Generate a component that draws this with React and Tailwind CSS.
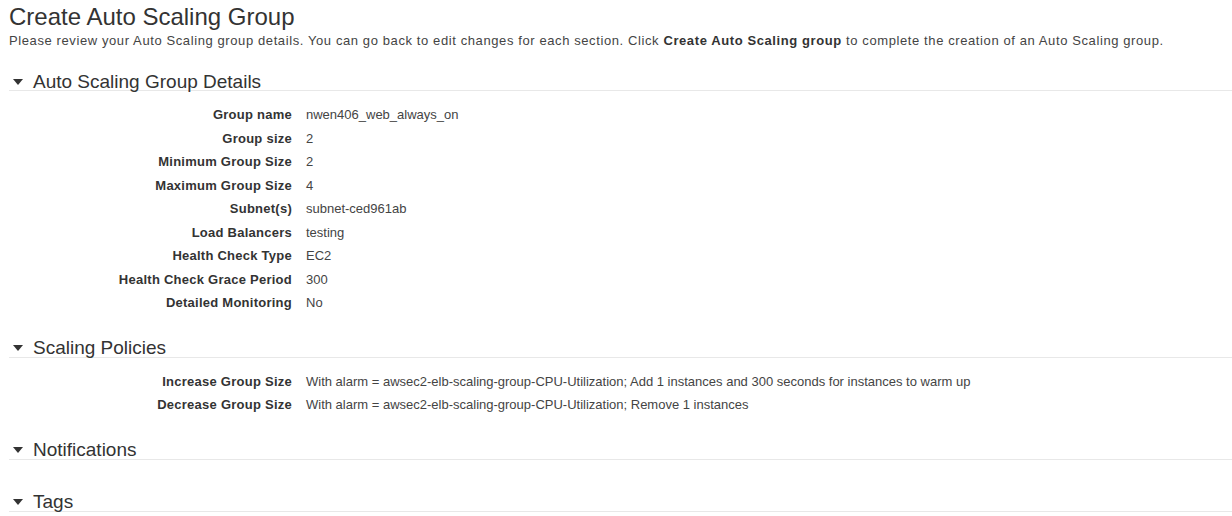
const details = [
  ['Group name', 'nwen406_web_always_on'],
  ['Group size', '2'],
  ['Minimum Group Size', '2'],
  ['Maximum Group Size', '4'],
  ['Subnet(s)', 'subnet-ced961ab'],
  ['Load Balancers', 'testing'],
  ['Health Check Type', 'EC2'],
  ['Health Check Grace Period', '300'],
  ['Detailed Monitoring', 'No'],
];

const policies = [
  ['Increase Group Size', 'With alarm = awsec2-elb-scaling-group-CPU-Utilization; Add 1 instances and 300 seconds for instances to warm up'],
  ['Decrease Group Size', 'With alarm = awsec2-elb-scaling-group-CPU-Utilization; Remove 1 instances'],
];

function SectionHeader({ title }) {
  return (
    <div className="flex items-center h-[22px] pt-[4px] border-b border-[#e8e8e8]">
      <svg width="10" height="6" viewBox="0 0 10 6" className="ml-[4px] mr-[10px]">
        <path d="M0 0 L10 0 L5 6 Z" fill="#333" />
      </svg>
      <span className="text-[19px] leading-[20px] text-[#333]">{title}</span>
    </div>
  );
}

function Rows({ rows }) {
  return (
    <div className="pt-[12px]">
      {rows.map(([label, value]) => (
        <div key={label} className="flex h-[23.5px] items-center text-[13px]">
          <div className="w-[283px] text-right font-bold tracking-[0.25px] text-[#333]">{label}</div>
          <div className="ml-[14px] text-[#444]">{value}</div>
        </div>
      ))}
    </div>
  );
}

export default function App() {
  return (
    <div className="min-h-screen bg-white pl-[9px] font-['Liberation_Sans',Arial,sans-serif]">
      <h1 className="text-[24px] leading-[28px] pt-[3px] text-[#333]">Create Auto Scaling Group</h1>
      <p className="mt-[2px] text-[13px] leading-[16px] tracking-[0.6px] text-[#444]">
        Please review your Auto Scaling group details. You can go back to edit changes for each section. Click{' '}
        <b className="text-[#333]">Create Auto Scaling group</b> to complete the creation of an Auto Scaling group.
      </p>

      <div className="mt-[20px]">
        <SectionHeader title="Auto Scaling Group Details" />
        <Rows rows={details} />
      </div>

      <div className="mt-[21px]">
        <SectionHeader title="Scaling Policies" />
        <Rows rows={policies} />
      </div>

      <div className="mt-[21px]">
        <SectionHeader title="Notifications" />
      </div>

      <div className="mt-[30px]">
        <SectionHeader title="Tags" />
      </div>
    </div>
  );
}
